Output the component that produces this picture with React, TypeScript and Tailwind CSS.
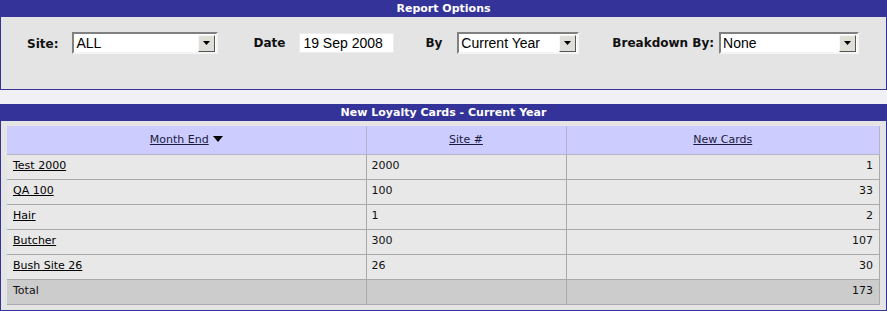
import React from 'react';

type Row = {
  name: string;
  site: string;
  cards: number;
};

const rows: Row[] = [
  { name: 'Test 2000', site: '2000', cards: 1 },
  { name: 'QA 100', site: '100', cards: 33 },
  { name: 'Hair', site: '1', cards: 2 },
  { name: 'Butcher', site: '300', cards: 107 },
  { name: 'Bush Site 26', site: '26', cards: 30 },
];

function Select({ value, width }: { value: string; width: string }) {
  return (
    <div
      className={`${width} h-[22px] flex items-center bg-white border-2 border-t-[#808080] border-l-[#808080] border-b-[#f4f4f4] border-r-[#f4f4f4]`}
    >
      <span className="flex-1 pl-[2px] text-[14px] leading-none text-black font-['Liberation_Sans',Arial,sans-serif]">
        {value}
      </span>
      <span className="w-[17px] h-[17px] mr-[1px] flex items-center justify-center bg-[#e0ded8] border border-t-[#f8f8f8] border-l-[#f8f8f8] border-b-[#555] border-r-[#555]">
        <svg width="7" height="4" viewBox="0 0 7 4">
          <path d="M0 0h7L3.5 4z" fill="#000" />
        </svg>
      </span>
    </div>
  );
}

function Panel({ title, children }: { title: string; children: React.ReactNode }) {
  return (
    <div className="border-x border-b border-[#333399] bg-[#e4e4e4]">
      <div className="h-[17px] bg-[#333399] text-white text-[11px] font-bold leading-[17px] text-center">
        {title}
      </div>
      {children}
    </div>
  );
}

export default function App() {
  const total = rows.reduce((s, r) => s + r.cards, 0);
  return (
    <div className="w-[887px] h-[311px] bg-[#f1f1f5] font-['DejaVu_Sans',Verdana,sans-serif] text-[#111]">
      <Panel title="Report Options">
        <div className="h-[72px] pt-[15px] flex items-start">
          <span className="ml-[26px] mt-[3px] text-[12px] font-bold">Site:</span>
          <div className="ml-[14px]">
            <Select value="ALL" width="w-[146px]" />
          </div>
          <span className="ml-[35px] mt-[2px] text-[12px] font-bold">Date</span>
          <div className="ml-[14px] mt-[1px] w-[95px] h-[20px] bg-white border border-[#ececec] flex items-center pl-[3px] text-[14px] leading-none font-['Liberation_Sans',Arial,sans-serif] text-black">
            19 Sep 2008
          </div>
          <span className="ml-[31px] mt-[2px] text-[12px] font-bold">By</span>
          <div className="ml-[15px]">
            <Select value="Current Year" width="w-[122px]" />
          </div>
          <span className="ml-[33px] mt-[2px] text-[12px] font-bold">Breakdown By:</span>
          <div className="ml-[5px]">
            <Select value="None" width="w-[140px]" />
          </div>
        </div>
      </Panel>

      <div className="h-[14px]" />

      <Panel title="New Loyalty Cards - Current Year">
        <div className="pt-[5px] pl-[6px] pr-[6px] pb-[5px]">
          <table className="w-[873px] border-collapse text-[11px] table-fixed">
            <colgroup>
              <col className="w-[359px]" />
              <col className="w-[200px]" />
              <col />
            </colgroup>
            <thead>
              <tr className="h-[28px] bg-[#ccccff]">
                <th className="font-normal border-b border-r border-[#b4b4c8] text-[#1a1a40]">
                  <span className="underline">Month End</span>
                  <svg className="inline-block ml-[4px] align-[1px]" width="10" height="6" viewBox="0 0 10 6">
                    <path d="M0 0h10L5 6z" fill="#000" />
                  </svg>
                </th>
                <th className="font-normal border-b border-r border-[#b4b4c8] text-[#1a1a40]">
                  <span className="underline">Site #</span>
                </th>
                <th className="font-normal border-b border-r border-[#b4b4c8] text-[#1a1a40]">
                  <span className="underline">New Cards</span>
                </th>
              </tr>
            </thead>
            <tbody>
              {rows.map((r) => (
                <tr key={r.name} className="h-[25px] bg-[#e8e8e8]">
                  <td className="pl-[6px] border-b border-r border-[#aaaaaa]">
                    <span className="underline text-black">{r.name}</span>
                  </td>
                  <td className="pl-[5px] border-b border-r border-[#aaaaaa]">{r.site}</td>
                  <td className="pr-[6px] text-right border-b border-r border-[#aaaaaa]">{r.cards}</td>
                </tr>
              ))}
              <tr className="h-[25px] bg-[#cccccc]">
                <td className="pl-[6px] border-b border-r border-[#aaaaaa]">Total</td>
                <td className="border-b border-r border-[#aaaaaa]" />
                <td className="pr-[6px] text-right border-b border-r border-[#aaaaaa]">{total}</td>
              </tr>
            </tbody>
          </table>
        </div>
      </Panel>
    </div>
  );
}
